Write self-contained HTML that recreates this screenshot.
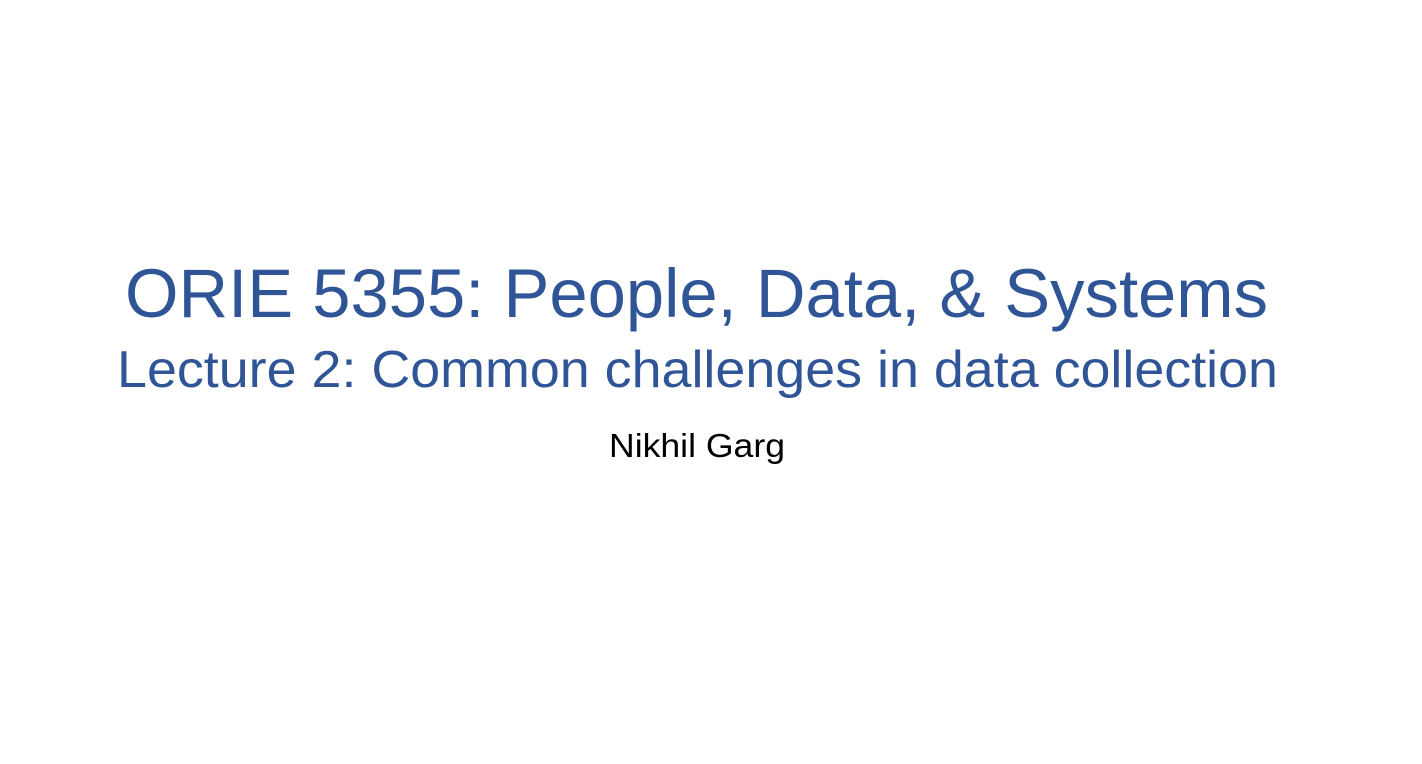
<!DOCTYPE html>
<html><head><meta charset="utf-8"><style>
html,body{margin:0;padding:0;background:#fff;width:1422px;height:764px;overflow:hidden}
svg{display:block}
text{font-family:"Liberation Sans",sans-serif}
</style></head><body>
<svg width="1422" height="764" viewBox="0 0 1422 764">
<rect width="1422" height="764" fill="#fff"/>
<text x="125" y="317" font-size="69" fill="#2F5597" textLength="1143" lengthAdjust="spacingAndGlyphs">ORIE 5355: People, Data, &amp; Systems</text>
<text x="117" y="387" font-size="52" fill="#2F5597" textLength="1161" lengthAdjust="spacingAndGlyphs">Lecture 2: Common challenges in data collection</text>
<text x="609" y="457" font-size="33" fill="#000" textLength="176" lengthAdjust="spacingAndGlyphs">Nikhil Garg</text>
</svg>
</body></html>
